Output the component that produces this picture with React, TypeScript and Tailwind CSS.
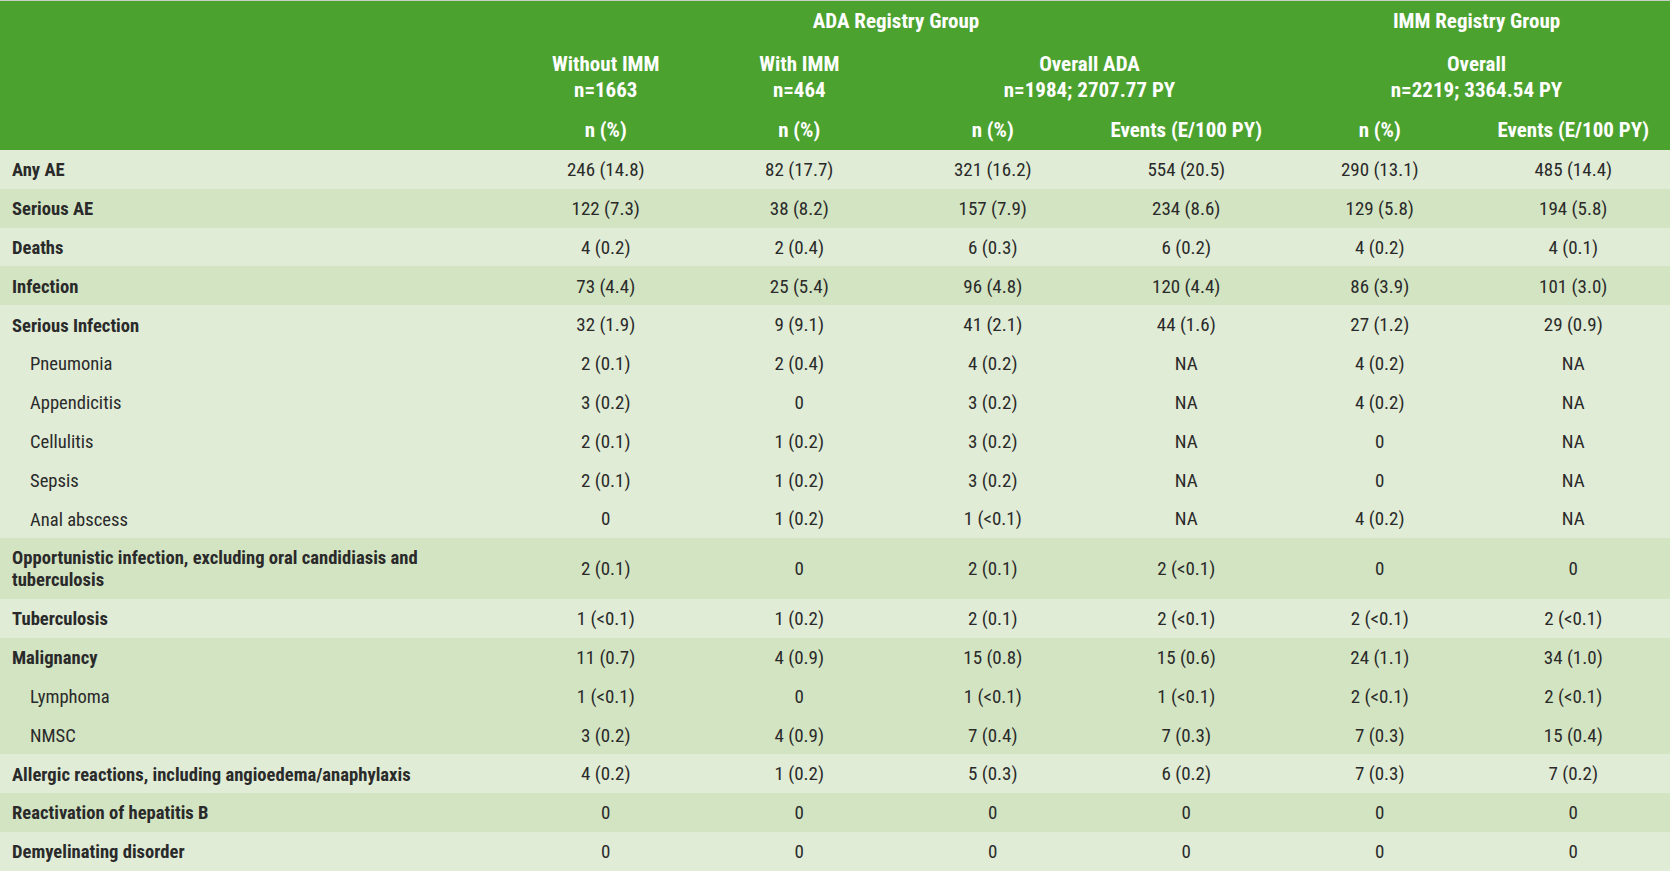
import React from "react";

type Row = {
  label: string;
  sub?: boolean;
  tall?: boolean;
  dark: boolean;
  values: string[];
};

const rows: Row[] = [
  { label: "Any AE", dark: false, values: ["246 (14.8)", "82 (17.7)", "321 (16.2)", "554 (20.5)", "290 (13.1)", "485 (14.4)"] },
  { label: "Serious AE", dark: true, values: ["122 (7.3)", "38 (8.2)", "157 (7.9)", "234 (8.6)", "129 (5.8)", "194 (5.8)"] },
  { label: "Deaths", dark: false, values: ["4 (0.2)", "2 (0.4)", "6 (0.3)", "6 (0.2)", "4 (0.2)", "4 (0.1)"] },
  { label: "Infection", dark: true, values: ["73 (4.4)", "25 (5.4)", "96 (4.8)", "120 (4.4)", "86 (3.9)", "101 (3.0)"] },
  { label: "Serious Infection", dark: false, values: ["32 (1.9)", "9 (9.1)", "41 (2.1)", "44 (1.6)", "27 (1.2)", "29 (0.9)"] },
  { label: "Pneumonia", sub: true, dark: false, values: ["2 (0.1)", "2 (0.4)", "4 (0.2)", "NA", "4 (0.2)", "NA"] },
  { label: "Appendicitis", sub: true, dark: false, values: ["3 (0.2)", "0", "3 (0.2)", "NA", "4 (0.2)", "NA"] },
  { label: "Cellulitis", sub: true, dark: false, values: ["2 (0.1)", "1 (0.2)", "3 (0.2)", "NA", "0", "NA"] },
  { label: "Sepsis", sub: true, dark: false, values: ["2 (0.1)", "1 (0.2)", "3 (0.2)", "NA", "0", "NA"] },
  { label: "Anal abscess", sub: true, dark: false, values: ["0", "1 (0.2)", "1 (<0.1)", "NA", "4 (0.2)", "NA"] },
  { label: "Opportunistic infection, excluding oral candidiasis and tuberculosis", tall: true, dark: true, values: ["2 (0.1)", "0", "2 (0.1)", "2 (<0.1)", "0", "0"] },
  { label: "Tuberculosis", dark: false, values: ["1 (<0.1)", "1 (0.2)", "2 (0.1)", "2 (<0.1)", "2 (<0.1)", "2 (<0.1)"] },
  { label: "Malignancy", dark: true, values: ["11 (0.7)", "4 (0.9)", "15 (0.8)", "15 (0.6)", "24 (1.1)", "34 (1.0)"] },
  { label: "Lymphoma", sub: true, dark: true, values: ["1 (<0.1)", "0", "1 (<0.1)", "1 (<0.1)", "2 (<0.1)", "2 (<0.1)"] },
  { label: "NMSC", sub: true, dark: true, values: ["3 (0.2)", "4 (0.9)", "7 (0.4)", "7 (0.3)", "7 (0.3)", "15 (0.4)"] },
  { label: "Allergic reactions, including angioedema/anaphylaxis", dark: false, values: ["4 (0.2)", "1 (0.2)", "5 (0.3)", "6 (0.2)", "7 (0.3)", "7 (0.2)"] },
  { label: "Reactivation of hepatitis B", dark: true, values: ["0", "0", "0", "0", "0", "0"] },
  { label: "Demyelinating disorder", dark: false, values: ["0", "0", "0", "0", "0", "0"] },
];

const grid = "grid grid-cols-[509px_repeat(6,minmax(0,1fr))]";

export default function App() {
  return (
    <div
      className="w-[1670px] bg-[#e0ecd6] text-[19px] text-[#2a2a2a] border-t border-[#c8cfc4]"
      style={{ fontFamily: '"Roboto Condensed", "Liberation Sans Narrow", "DejaVu Sans Condensed", sans-serif' }}
    >
      {/* Header */}
      <div className="bg-[#4ca22f] text-white font-bold text-[21px] h-[149px] flex flex-col">
        <div className={`${grid} h-[41px] items-center pt-[1px]`}>
          <div />
          <div className="col-span-4 text-center">ADA Registry Group</div>
          <div className="col-span-2 text-center">IMM Registry Group</div>
        </div>
        <div className={`${grid} h-[67px] items-center leading-[26px] pt-[2px]`}>
          <div />
          <div className="text-center">Without IMM<br />n=1663</div>
          <div className="text-center">With IMM<br />n=464</div>
          <div className="col-span-2 text-center">Overall ADA<br />n=1984; 2707.77 PY</div>
          <div className="col-span-2 text-center">Overall<br />n=2219; 3364.54 PY</div>
        </div>
        <div className={`${grid} h-[41px] items-center pt-[2px]`}>
          <div />
          <div className="text-center">n (%)</div>
          <div className="text-center">n (%)</div>
          <div className="text-center">n (%)</div>
          <div className="text-center">Events (E/100 PY)</div>
          <div className="text-center">n (%)</div>
          <div className="text-center">Events (E/100 PY)</div>
        </div>
      </div>

      {/* Body */}
      {rows.map((r) => (
        <div
          key={r.label}
          className={`${grid} items-center pt-[2px] ${r.tall ? "h-[61px]" : "h-[38.8px]"} ${r.dark ? "bg-[#d3e4c3]" : "bg-[#e0ecd6]"}`}
        >
          <div className={`${r.sub ? "pl-[30px] font-normal" : "pl-[12px] font-bold"} pr-[60px] text-[18.6px] leading-[22px]`}>
            {r.label}
          </div>
          {r.values.map((v, i) => (
            <div key={i} className="text-center">{v}</div>
          ))}
        </div>
      ))}
    </div>
  );
}
